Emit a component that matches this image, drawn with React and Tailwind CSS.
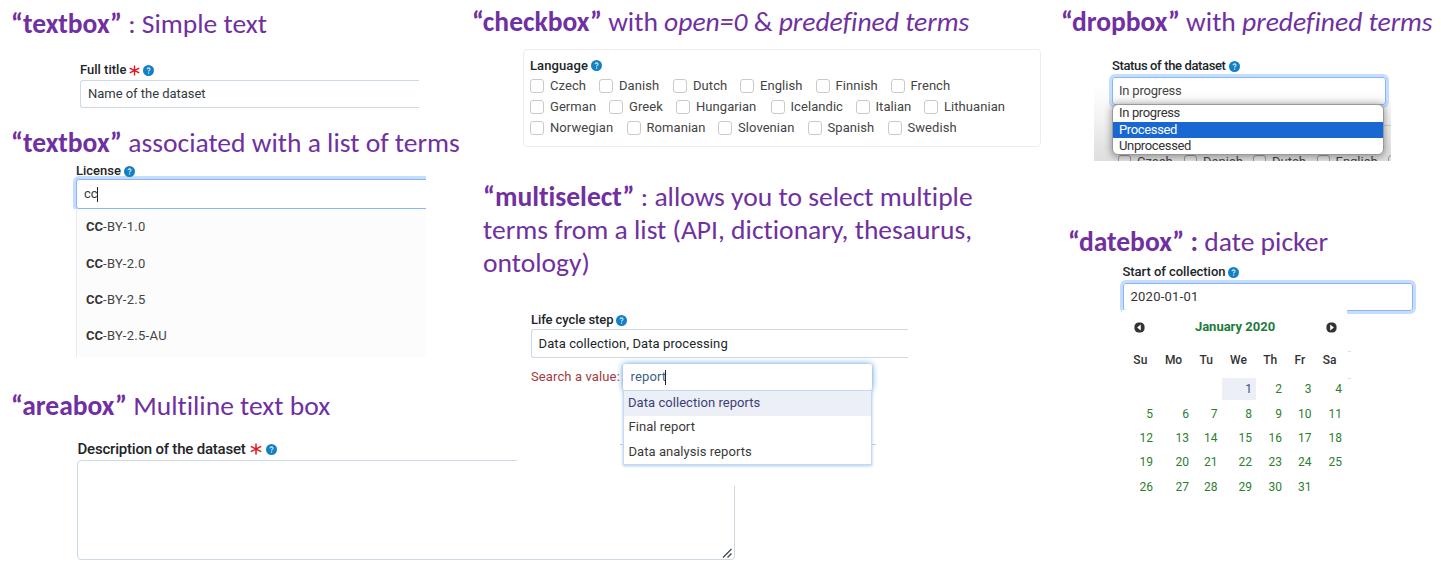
const HEADING =
  "font-['Carlito','Lato',sans-serif] text-[27.55px] text-[#7030a0] whitespace-nowrap [font-variant-ligatures:none]";

function Heading({ className = "", children }) {
  return <h2 className={`${HEADING} flex items-center ${className}`}><span className="whitespace-pre">{children}</span></h2>;
}

function Help({ className = "size-[11px]" }) {
  return (
    <svg viewBox="0 0 12 12" className={`shrink-0 ${className}`}>
      <circle cx="6" cy="6" r="6" fill="#1380c4" />
      <path d="M4.4 4.7Q4.5 3.1 6.1 3.1Q7.7 3.2 7.7 4.6Q7.6 5.5 6.7 5.9Q6.1 6.2 6.1 7" fill="none" stroke="#d3e6f4" strokeWidth="1.2" />
      <circle cx="6.1" cy="8.8" r=".8" fill="#d3e6f4" />
    </svg>
  );
}

function Required({ className = "size-[11px]" }) {
  return (
    <svg viewBox="0 0 12 12" className={`shrink-0 ${className}`} stroke="#e0141e" strokeWidth="1.5">
      <path d="M6 .5V11.5M.8 3.4L11.2 8.6M11.2 3.4L.8 8.6" />
    </svg>
  );
}

function Label({ text, className = "", textClass = "", required, big }) {
  return (
    <div className={`flex items-center h-5 font-medium text-[#212529] whitespace-nowrap ${big ? "text-[15px]" : "text-[13px]"} ${className}`}>
      <span className={textClass}>{text}</span>
      {required && <Required className={big ? "size-3 ml-1" : "size-[11px] ml-[3px]"} />}
      <Help className={big ? "size-[11px] ml-[4px]" : "size-[11px] ml-[3px]"} />
    </div>
  );
}

const licenses = ["-BY-1.0", "-BY-2.0", "-BY-2.5", "-BY-2.5-AU"];

const languages = [
  [["Czech", "w-[69px]"], ["Danish", "w-[74px]"], ["Dutch", "w-[67px]"], ["English", "w-[75.5px]"], ["Finnish", "w-[75px]"], ["French", "w-[70px]"]],
  [["German", "w-[79px]"], ["Greek", "w-[67px]"], ["Hungarian", "w-[94.5px]"], ["Icelandic", "w-[85px]"], ["Italian", "w-[68.5px]"], ["Lithuanian", "w-[85px]"]],
  [["Norwegian", "w-[96.5px]"], ["Romanian", "w-[91.5px]"], ["Slovenian", "w-[89.5px]"], ["Spanish", "w-[80px]"], ["Swedish", "w-[75px]"]],
];

const dim = [["Czech", "w-[66px]"], ["Danish", "w-[69px]"], ["Dutch", "w-[63.5px]"], ["English", "w-[71px]"]];

const weeks = [
  ["", "", "", 1, 2, 3, 4],
  [5, 6, 7, 8, 9, 10, 11],
  [12, 13, 14, 15, 16, 17, 18],
  [19, 20, 21, 22, 23, 24, 25],
  [26, 27, 28, 29, 30, 31, ""],
];

const CAL_COLS = "grid grid-cols-[36px_36px_28.5px_34.5px_30px_29.5px_30.5px]";

function Arrow({ flip }) {
  return (
    <svg viewBox="0 0 12 12" className="size-[11px]">
      <rect x=".5" y=".5" width="11" height="11" rx="4.5" fill="#333" />
      <path d={flip ? "M4.6 2.8L8.6 6L4.6 9.2Z" : "M7.4 2.8L3.4 6L7.4 9.2Z"} fill="#fff" />
    </svg>
  );
}

function LeftColumn() {
  return (
    <section className="w-[470px] shrink-0">
      <Heading className="h-[48px] pl-[11px]"><b>“textbox”</b> : Simple text</Heading>
      <Label text="Full title" required className="mt-[12px] ml-[80px]" />
      <div className="ml-[80px] w-[339px] h-[28px] border border-r-0 border-[#ced9e8] rounded-l-[3px] flex items-center pl-[7px] pb-px text-[#343a40] tracking-[-0.03px]">
        Name of the dataset
      </div>
      <Heading className="h-[53px] pl-[11px] pt-[17px]"><b>“textbox”</b> associated with a list of terms</Heading>
      <Label text="License" className="ml-[76px]" />
      <div className="ml-[72px] w-[354px] h-[33px] -mt-[5px] pt-[3px] overflow-hidden">
        <div className="ml-[4px] w-[360px] h-[30px] border border-[#86b7fe] rounded-[3px] shadow-[0_0_0_3px_#c6dcfb] flex items-center pl-[7px] text-[#343a40] bg-white">
          cc<span className="w-px h-[15px] bg-[#222] -ml-px" />
        </div>
      </div>
      <ul className="relative ml-[76px] w-[350px] h-[148px] bg-[#fcfcfc] border-l border-[#e9e9e9] pl-[9px] text-[#444]">
        {licenses.map((l) => (
          <li key={l} className="h-[36.3px] flex items-center tracking-[0.3px]"><b className="text-[#333] tracking-normal">CC</b>{l}</li>
        ))}
      </ul>
      <Heading className="h-[64px] pl-[11px] pt-[34px]"><b>“areabox”</b> Multiline text box</Heading>
      <Label text="Description of the dataset" required big className="mt-[18px] ml-[77.5px]" textClass="tracking-[-0.2px]" />
      <div className="relative mt-px ml-[77px] w-[658px] h-[100px] border border-[#ced9e6] rounded-[4px]">
        <div className="absolute left-[439px] -top-px -right-px h-[26px] bg-white" />
        <svg viewBox="0 0 10 10" className="absolute right-[2px] bottom-[1px] size-[10px]" stroke="#444" strokeWidth="1.2">
          <path d="M1 9.5L9.5 1M5.5 9.5L9.5 5.5" />
        </svg>
      </div>
    </section>
  );
}

function MiddleColumn() {
  return (
    <section className="relative w-[580px] shrink-0">
      <Heading className="h-[43px] pl-[2px]"><b>“checkbox”</b> with <i>open=0</i> &amp; <i>predefined terms</i></Heading>
      <div className="mt-[6px] ml-[53px] w-[518px] h-[98px] border border-[#ededed] rounded-[4px] pl-[6px] pt-[6px]">
        <Label text="Language" className="h-[19px]" textClass="tracking-[0.1px]" />
        {languages.map((row, i) => (
          <div key={i} className="flex h-[21.2px] items-center text-[#444]">
            {row.map(([name, w]) => (
              <label key={name} className={`flex items-center shrink-0 ${w}`}>
                <span className="size-[14px] mr-[6px] border-[1.5px] border-[#cacaca] rounded-[3px] shrink-0" />
                <span className="tracking-[0.06px]">{name}</span>
              </label>
            ))}
          </div>
        ))}
      </div>
      <Heading className="mt-[33px] pl-[13px] leading-[33px]">
        <b>“multiselect”</b> : allows you to select multiple<br />terms from a list (API, dictionary, thesaurus,<br />ontology)
      </Heading>
      <Label text="Life cycle step" className="mt-[31px] ml-[61px]" textClass="tracking-[-0.08px]" />
      <div className="-mt-px ml-[61px] w-[377px] h-[29px] border border-r-0 border-[#ced9e8] rounded-l-[3px] flex items-center pl-[6.5px] text-[#212529] tracking-[0.1px]">
        Data collection, Data processing
      </div>
      <div className="flex mt-[6px] ml-[61px]">
        <span className="w-[92px] shrink-0 mt-[3px] text-[#a33a40] tracking-[0.12px]">Search a value:</span>
        <div className="w-[249px] shadow-[0_1px_3px_#a9caee]">
          <div className="h-[26px] bg-white rounded-[3px] flex items-center pl-[7.5px] text-[#3b5f85] tracking-[0.15px] shadow-[0_0_7px_#6fa5de]">
            report<span className="w-px h-[15px] bg-[#222] -ml-px" />
          </div>
          <ul className="relative bg-white border border-[#c5daf2] h-[75px] text-[#3a3a3a] tracking-[0.05px]">
            <li className="h-[24.5px] bg-[#eceff5] flex items-center pl-[4px] pb-px text-[#3d3d7a]">Data collection reports</li>
            <li className="h-[24px] flex items-center pl-[4.5px] pb-px">Final report</li>
            <li className="h-[24.5px] flex items-center pl-[4.5px]">Data analysis reports</li>
          </ul>
        </div>
      </div>
      <span className="absolute left-[150px] top-[444px] w-[3px] h-px bg-[#b5cbe3]" />
      <span className="absolute left-[402px] top-[444px] w-[4px] h-px bg-[#b5cbe3]" />
    </section>
  );
}

function StatusSelect() {
  return (
    <div className="relative ml-[44px] -mt-[2px] w-[297px] h-[87px] overflow-hidden">
      <div className="absolute inset-x-0 bottom-0 h-[76px] bg-[linear-gradient(to_bottom,#fff,#f4f4f4_40%,#e4e4e4_80%,#dedede)]" />
      <div className="absolute -bottom-[9px] left-[24px] flex h-[17px] w-[290px] items-center text-[#444]">
        {dim.map(([d, w]) => (
          <span key={d} className={`flex items-center shrink-0 ${w}`}>
            <span className="size-[13px] mr-[6px] border border-[#999] rounded-[3px] bg-[#e4e4e4] shrink-0" />
            {d}
          </span>
        ))}
        <span className="size-[13px] border border-[#999] rounded-[3px] shrink-0" />
      </div>
      <div className="absolute left-[289px] top-[51px] w-[8px] h-px bg-[#ccc]" />
      <div className="absolute left-[18px] top-[3px] w-[274px] h-[28px] border border-[#86b7fe] rounded-[3px] shadow-[0_0_0_3px_#c6dcfb] bg-[linear-gradient(to_bottom,#fff_50%,#f4f4f4)] flex items-center pb-px pl-[6px] text-[#444] tracking-[-0.2px]">
        In progress
      </div>
      <div className="absolute left-[18px] top-[30px] w-[272px] h-[51px] rounded-[6px] border border-[#999] bg-white overflow-hidden text-[#333] tracking-[-0.35px] shadow-[0_1px_7px_1px_rgba(0,0,0,0.35)] leading-[16.5px]">
        <div className="pl-[6px] h-[16.5px]">In progress</div>
        <div className="pl-[6px] h-[16.5px] bg-[#1967d2] text-white">Processed</div>
        <div className="pl-[6px] h-[16.5px]">Unprocessed</div>
      </div>
    </div>
  );
}

function Calendar() {
  return (
    <div className="relative w-[225px] h-[190px] bg-white -mt-px pt-[9px] ml-[72px]">
      <div className="flex justify-between items-center h-[16px] pl-[12px] pr-[10px]">
        <Arrow />
        <b className="text-[#1c7c3c] -ml-px">January 2020</b>
        <Arrow flip />
      </div>
      <div className="flex h-[16px] mt-[17px] items-center text-[12px] font-medium text-[#333] text-center">
        <span className="w-[37px]">Su</span>
        <span className="w-[30px]">Mo</span>
        <span className="w-[36px]">Tu</span>
        <span className="w-[29px]">We</span>
        <span className="w-[35px]">Th</span>
        <span className="w-[25px]">Fr</span>
        <span className="w-[35px]">Sa</span>
      </div>
      <div className="mt-[9px] ml-[-2px] text-[12px] text-[#2e7d32]">
        {weeks.map((w, i) => (
          <div key={i} className={`${CAL_COLS} h-[24.4px]`}>
            {w.map((d, j) => (
              <span key={j} className={`flex items-center justify-end pr-[3px] ${d === 1 ? "h-[22px] mt-px ml-[1px] -mr-px pr-[4px]! bg-[#eceff5] text-[#3d4a8a]" : ""}`}>{d}</span>
            ))}
          </div>
        ))}
      </div>
      <span className="absolute left-[226px] top-[41px] w-[3px] h-px bg-[#d5deea]" />
      <span className="absolute left-[226px] top-[68px] w-[3px] h-px bg-[#d5deea]" />
    </div>
  );
}

function RightColumn() {
  return (
    <section className="w-[391px] shrink-0">
      <Heading className="h-[43px] pl-[11px]"><b>“dropbox”</b> with <i>predefined terms</i></Heading>
      <Label text="Status of the dataset" className="mt-[13px] ml-[62px]" textClass="tracking-[-0.37px]" />
      <StatusSelect />
      <Heading className="mt-[60px] h-[42px] pl-[18px]"><b>“datebox” :</b> date picker</Heading>
      <Label text="Start of collection" className="-mt-px ml-[72.5px]" textClass="tracking-[-0.04px]" />
      <div className="ml-[73px] mt-px w-[290px] h-[28px] border border-[#86b7fe] rounded-[3px] shadow-[0_0_0_3px_#c6dcfb] flex items-center pl-[6.5px] text-[#333] tracking-[0.25px]">
        2020-01-01
      </div>
      <Calendar />
    </section>
  );
}

export default function App() {
  return (
    <main className="flex w-[1441px] h-[568px] overflow-hidden bg-white font-['Roboto','Liberation_Sans',sans-serif] text-[13px]">
      <LeftColumn />
      <MiddleColumn />
      <RightColumn />
    </main>
  );
}
